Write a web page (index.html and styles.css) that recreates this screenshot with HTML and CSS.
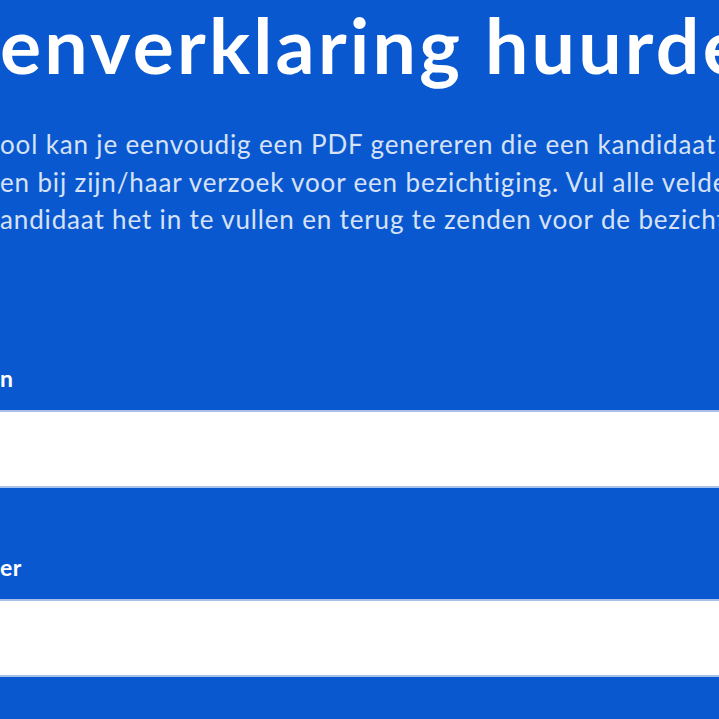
FILE: index.html
```html
<!DOCTYPE html>
<html lang="nl">
<head>
<meta charset="utf-8">
<title>Inkomenverklaring huurder</title>
<link rel="stylesheet" href="styles.css">
</head>
<body>
<main class="page">
  <h1 class="title">enverklaring huurder</h1>
  <p class="intro">ool kan je eenvoudig een PDF genereren die een kandidaat huurder kan<br>en bij zijn/haar verzoek voor een bezichtiging. Vul alle velden in en vraag<br>andidaat het in te vullen en terug te zenden voor de bezichtiging.</p>
  <form class="form">
    <div class="field">
      <label class="label" for="f1">n</label>
      <input class="input" id="f1" type="text">
    </div>
    <div class="field">
      <label class="label" for="f2">er</label>
      <input class="input" id="f2" type="text">
    </div>
  </form>
</main>
</body>
</html>
```

FILE: styles.css
```css
html, body {
  margin: 0;
  padding: 0;
  background: #0a58d0;
  overflow: hidden;
}
.page {
  width: 719px;
  height: 719px;
  overflow: hidden;
  font-family: "Lato", "Noto Sans", sans-serif;
}
.title {
  margin: 6px 0 0 0;
  font-size: 77px;
  line-height: 76px;
  font-weight: 700;
  letter-spacing: 3.2px;
  color: #ffffff;
  white-space: nowrap;
}
.intro {
  margin: 44px 0 0 0;
  font-size: 26px;
  line-height: 37.5px;
  letter-spacing: 0.85px;
  color: #d6e2f6;
  white-space: nowrap;
}
.form {
  margin-top: 126px;
  display: flex;
  flex-direction: column;
  gap: 66px;
}
.field {
  display: flex;
  flex-direction: column;
  gap: 19px;
}
.label {
  font-size: 23px;
  line-height: 26px;
  font-weight: 700;
  letter-spacing: 0.5px;
  color: #ffffff;
}
.input {
  display: block;
  box-sizing: border-box;
  height: 78px;
  margin: 0 -20px;
  background: #ffffff;
  border: 2px solid #a8c0ea;
  border-left: none;
  border-right: none;
  outline: none;
}
```
